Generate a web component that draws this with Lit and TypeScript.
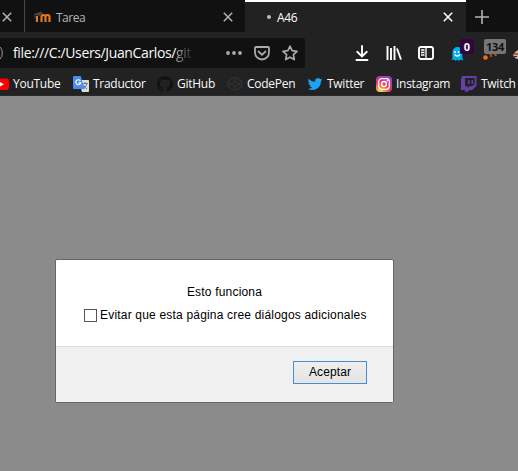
import { LitElement, html, svg, css } from "lit";
import { customElement } from "lit/decorators.js";

const icons: Record<string, unknown> = {
  youtube: svg`<rect x="0" y="2.5" width="16" height="11.5" rx="3" fill="#f00"/><path d="M6.3 5.6v5.2L11 8.2z" fill="#fff"/>`,
  translate: svg`<path d="M6 4h9.2q.8 0 .8.8V15q0 1-.8 1H9z" fill="#dcdcdc"/><path d="M9 7.5h6M12 6v1.5M14 7.500q-1 4-4 5.500M10.500 9q1 2.500 3.500 4" stroke="#6b7a80" fill="none"/><path d="M1 0h6.700l3.800 13H1q-1 0-1-1V1q0-1 1-1z" fill="#4b8bf4"/><path d="M7.300 4.800A2.500 2.500 0 1 0 7.700 6.800H5.400" stroke="#fff" stroke-width="1.200" fill="none"/>`,
  github: svg`<path fill="#111214" d="M8 0C3.580 0 0 3.580 0 8c0 3.540 2.290 6.530 5.470 7.590.4.070.55-.17.55-.38v-1.490c-2.010.37-2.530-.49-2.690-.94-.09-.23-.48-.94-.82-1.130-.28-.15-.68-.52-.01-.53.63-.01 1.080.58 1.230.82.72 1.210 1.870.87 2.330.66.07-.52.28-.87.51-1.070-1.780-.2-3.640-.89-3.640-3.950 0-.87.31-1.590.82-2.150-.08-.2-.36-1.020.08-2.120 0 0 .67-.21 2.200.82a7.600 7.600 0 0 1 4 0c1.530-1.040 2.200-.82 2.200-.82.44 1.100.16 1.920.08 2.120.51.56.82 1.270.82 2.150 0 3.070-1.870 3.750-3.650 3.950.29.25.54.73.54 1.480v2.190c0 .21.15.46.55.38A8 8 0 0 0 8 0z"/>`,
  codepen: svg`<path d="M8 1l7 4.500v5L8 15l-7-4.500v-5zM8 1v4.500M8 10.500V15M1 5.500l7 5 7-5M1 10.500l7-5 7 5" fill="none" stroke="#333436" stroke-width="1"/>`,
  twitter: svg`<path transform="translate(.8 .8) scale(.61)" fill="#1da1f2" d="M23.950 4.570a10 10 0 0 1-2.820.77 4.960 4.960 0 0 0 2.160-2.720c-.95.560-2 .960-3.130 1.180a4.920 4.920 0 0 0-8.380 4.480C7.690 8.100 4.070 6.130 1.640 3.160a4.920 4.920 0 0 0 1.520 6.570 4.900 4.900 0 0 1-2.230-.61v.06a4.920 4.920 0 0 0 3.950 4.830 5 5 0 0 1-2.210.08 4.940 4.940 0 0 0 4.600 3.420A9.870 9.870 0 0 1 0 19.540a14 14 0 0 0 7.550 2.210c9.050 0 14-7.500 14-13.980 0-.21 0-.42-.02-.63a9.940 9.940 0 0 0 2.420-2.570z"/>`,
  instagram: svg`<defs><radialGradient id="ig" cx=".25" cy="1" r="1.100"><stop offset="0" stop-color="#ffdc55"/><stop offset=".3" stop-color="#fb8c39"/><stop offset=".58" stop-color="#e63473"/><stop offset="1" stop-color="#8b42d4"/></radialGradient></defs><rect width="16" height="16" rx="4" fill="url(#ig)"/><rect x="2.700" y="2.700" width="10.600" height="10.600" rx="3" fill="none" stroke="#fff" stroke-width="1.200"/><circle cx="8" cy="8" r="2.500" fill="none" stroke="#fff" stroke-width="1.300"/><circle cx="11.300" cy="4.700" r=".8" fill="#fff"/>`,
  twitch: svg`<path fill="#6441a5" fill-rule="evenodd" d="M1.200 0H15.500V9.800L11.300 14H8.300L6.200 16H4.200V14H0V2.800zM4 2V10.300H6.500V12L8.300 10.300H11.300L13.700 8V2z"/><path d="M8 4v4M11.300 4v4" stroke="#6441a5" stroke-width="1.500"/>`,
};

const bookmarks = [
  ["youtube", "YouTube"],
  ["translate", "Traductor"],
  ["github", "GitHub"],
  ["codepen", "CodePen"],
  ["twitter", "Twitter"],
  ["instagram", "Instagram"],
  ["twitch", "Twitch"],
];

const cross = html`<svg class="cross" width="10" height="10" viewBox="0 0 10 10"><path d="M.8.800l8.400 8.400M9.200.800L.800 9.200" stroke="currentColor" stroke-width="1.500"/></svg>`;

@customElement("app-root")
export class AppRoot extends LitElement {
  static styles = css`
    :host {
      display: flex;
      flex-direction: column;
      width: 518px;
      height: 471px;
      overflow: hidden;
      background: #8b8b8b;
      font: 12px/16px "Open Sans", "Noto Sans", sans-serif;
      color: #f9f9fa;
    }
    * { box-sizing: border-box; }
    svg { display: block; flex: none; }
    .tabs { display: flex; height: 32px; background: #111; flex: none; }
    .tab { display: flex; align-items: center; padding-top: 2px; flex: none; color: #b4b4b6; }
    .cut { width: 25px; border-right: 1px solid #484848; padding-left: 2px; }
    .idle { width: 220px; padding-left: 9px; }
    .idle .cross { margin-left: auto; margin-right: 12px; }
    .title { margin-left: 5px; letter-spacing: -0.5px; padding-top: 1px; }
    .active { width: 221px; background: #222; border-top: 2px solid #fff; padding: 0 0 0 22px; color: #fff; }
    .active .title { letter-spacing: -0.4px; margin-left: 6px; }
    .active .cross { margin-left: auto; margin-right: 13px; }
    .dot { width: 4px; height: 4px; border-radius: 50%; background: #bbb; }
    .plus { padding-left: 9px; }
    .toolbar { display: flex; height: 41px; background: #222; flex: none; padding-top: 6px; }
    .url { flex: none; width: 305px; height: 30px; background: #111; border-radius: 0 2px 2px 0; display: flex; align-items: center; }
    .address { margin-left: 10px; width: 211px; font-size: 14px; letter-spacing: -0.37px; white-space: nowrap; }
    .fade { background: linear-gradient(90deg, #aaa, #333); -webkit-background-clip: text; color: transparent; }
    .gap { margin-left: 12px; }
    .actions { display: flex; flex: none; height: 30px; align-items: center; padding-left: 49px; }
    .actions > * { margin-right: 16px; }
    .actions > .last { margin-right: 13px; }
    .addon { position: relative; width: 17px; height: 16px; flex: none; }
    .badge { position: absolute; left: 10px; top: -6px; width: 14px; height: 15px; border-radius: 2px; background: #31053f; font: bold 11px/15px "Open Sans", sans-serif; text-align: center; }
    .wide { left: 1px; width: 22px; background: #777; color: #111; letter-spacing: -0.3px; }
    .bookmarks { display: grid; grid-template-columns: 80px 84px 70px 80px 69px 85px 64px; height: 23px; background: #222; flex: none; margin-left: -7px; align-items: center; border-bottom: 1px solid #292929; }
    .bookmark { display: flex; gap: 4px; align-items: center; white-space: nowrap; letter-spacing: -0.27px; }
    .page { flex: 1; padding: 163px 0 0 55px; }
    .dialog { width: 339px; height: 144px; border: 1px solid #666; border-radius: 2px; background: #fff; color: #000; font: 12px/16px "Liberation Sans", Arial, sans-serif; display: flex; flex-direction: column; letter-spacing: 0.19px; }
    .body { height: 87px; flex: none; padding: 24px 0 0 28px; display: flex; flex-direction: column; gap: 7px; border-bottom: 1px solid #ddd; }
    .message { width: 281px; text-align: center; }
    .option { display: flex; gap: 3px; align-items: center; white-space: nowrap; }
    .box { width: 13px; height: 13px; border: 1px solid #555; background: #fff; }
    .footer { flex: 1; background: #f0f0f0; display: flex; justify-content: flex-end; padding: 14px 26px 0 0; }
    .accept { width: 74px; height: 23px; padding: 0 0 2px; border: 1px solid #448fd0; background: linear-gradient(#efefef, #e4e4e4); font: inherit; letter-spacing: 0.1px; color: inherit; }
  `;

  render() {
    return html`
      <div class="tabs">
        <div class="tab cut">${cross}</div>
        <div class="tab idle">
          <svg width="17" height="12" viewBox="0 0 17 12"><path d="M3 11V5M7.500 11V6q0-2 2-2t2 2v5M11.500 6q0-2 2-2t2 2v5" fill="none" stroke="#df7927" stroke-width="2.200"/><path d="M0 3L7 .500l2 2-4 2.500q-2-1-4-1z" fill="#4a4542"/><path d="M1 3.500v4" stroke="#5c4638"/></svg>
          <span class="title">Tarea</span>${cross}
        </div>
        <div class="tab active"><i class="dot"></i><span class="title">A46</span>${cross}</div>
        <div class="tab plus"><svg width="14" height="14" viewBox="0 0 14 14"><path d="M7 0v14M0 7h14" stroke="#b4b4b6" stroke-width="1.600"/></svg></div>
      </div>
      <div class="toolbar">
        <div class="url">
          <svg width="3" height="14" viewBox="0 0 3 14"><path d="M0 1q2.300 2 2.300 6T0 13" fill="none" stroke="#999"/></svg>
          <span class="address">file:///C:/Users/JuanCarlos/<span class="fade">git</span></span>
          <svg width="18" height="4" viewBox="0 0 18 4"><g fill="#aaa"><circle cx="4" cy="2" r="1.900"/><circle cx="10" cy="2" r="1.900"/><circle cx="16" cy="2" r="1.900"/></g></svg>
          <svg class="gap" width="16" height="15" viewBox="0 0 16 15"><path d="M2 1h12q1 0 1 1v4.500a7 7 0 0 1-14 0V2q0-1 1-1zM4.500 5.500L8 8.800l3.500-3.300" fill="none" stroke="#aaa" stroke-width="1.800" stroke-linecap="round" stroke-linejoin="round"/></svg>
          <svg class="gap" width="16" height="16" viewBox="0 0 16 16"><path d="M8 1.200l2.100 4.500 4.900.6-3.600 3.400.9 4.900L8 12.200l-4.300 2.400.9-4.900L1 6.300l4.900-.6z" fill="none" stroke="#aaa" stroke-width="1.700" stroke-linejoin="round"/></svg>
        </div>
        <div class="actions">
          <svg width="16" height="16" viewBox="0 0 16 16"><path d="M8 1v10M3.200 6.800L8 11.500l4.800-4.700M2.500 15h11" fill="none" stroke="#fff" stroke-width="1.900" stroke-linecap="round"/></svg>
          <svg width="16" height="16" viewBox="0 0 16 16"><path d="M1.500 1v14M5 3v12M8.500 1v14M11 3.500L15 14.500" fill="none" stroke="#fff" stroke-width="1.900"/></svg>
          <svg width="16" height="16" viewBox="0 0 16 16"><rect x="1" y="2" width="14" height="12" rx="2" fill="none" stroke="#fff" stroke-width="1.900"/><path d="M8 2v12M3 5h3.500M3 7.500h3.500M3 10h3.500" stroke="#fff" stroke-width="1.300"/></svg>
          <div class="addon">
            <svg width="16" height="16" viewBox="0 0 16 16"><path d="M2.500 13V7a4.900 5 0 0 1 9.800 0v6l1.200 2.500-3-1-1.500 1.500-1.700-1.500L5.500 16l-1.200-1.500L1.500 15z" fill="#00aef0"/><path d="M5 6v2M8.500 6v2M4.500 9.500q2.800 3 5.500 0" fill="none" stroke="#fff" stroke-width="1.400"/></svg>
            <span class="badge">0</span>
          </div>
          <div class="addon last">
            <svg width="16" height="16" viewBox="0 0 16 16"><circle cx="2.500" cy="12.500" r="2.300" fill="#f36d13"/><path d="M4 7q4.500 1 4.300 5M8 7q4.500 1 5 4" fill="none" stroke="#b9511a" stroke-width="1.800"/></svg>
            <span class="badge wide">134</span>
          </div>
          <svg width="14" height="16" viewBox="0 0 14 16"><path d="M0 10q1-3 5-5v9q-3 0-5-4z" fill="#d8b18c"/><path d="M1 9h4M1 11.500h3" stroke="#403027"/></svg>
        </div>
      </div>
      <div class="bookmarks">
        ${bookmarks.map(([icon, label]) => html`<div class="bookmark"><svg width="16" height="16" viewBox="0 0 16 16">${icons[icon]}</svg><span>${label}</span></div>`)}
      </div>
      <div class="page">
        <div class="dialog">
          <div class="body">
            <div class="message">Esto funciona</div>
            <div class="option"><span class="box"></span><span>Evitar que esta página cree diálogos adicionales</span></div>
          </div>
          <div class="footer"><button class="accept">Aceptar</button></div>
        </div>
      </div>
    `;
  }
}
